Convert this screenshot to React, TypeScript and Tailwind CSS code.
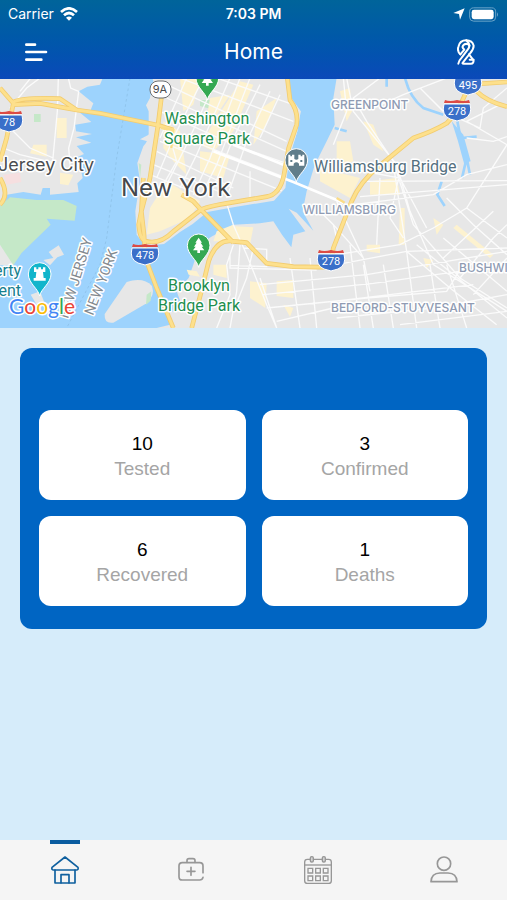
import React from "react";
import { useState } from "react";

const stats = [
  { label: "Tested", value: 10 },
  { label: "Confirmed", value: 3 },
  { label: "Recovered", value: 6 },
  { label: "Deaths", value: 1 },
];

const MANHATTAN =
  "M455 0 L470 20 L450 60 L452 150 L436 205 L415 255 L424 310 L410 400 L414 470 L440 500 L492 492 L540 452 L578 432 L622 398 L700 384 L822 366 L852 330 L866 240 L892 160 L902 100 L872 60 L862 0 Z";

const WATER =
  "M308 0 L300 20 L262 26 L236 40 L280 76 L272 96 L240 104 L274 132 L226 140 L228 160 L276 168 L228 178 L274 194 L230 204 L252 228 L226 240 L240 262 L248 300 L232 316 L236 342 L150 350 L150 330 L128 330 L122 350 L70 342 L20 350 L0 384 L0 750 L470 750 L510 740 L505 706 L548 690 L530 640 L566 600 L580 560 L600 500 L634 476 L700 440 L780 436 L820 430 L846 470 L874 508 L880 470 L916 460 L866 392 L890 404 L940 458 L908 400 L920 340 L944 262 L980 190 L1004 140 L1000 60 L1010 0 L866 0 L874 60 L902 100 L892 160 L868 240 L856 330 L822 368 L700 388 L622 402 L578 438 L540 462 L492 498 L436 504 L410 470 L406 400 L420 310 L412 255 L430 205 L442 190 L420 184 L446 170 L446 100 L438 82 L450 60 L462 0 Z";

const HIGHWAYS =
  "M0 30 L40 76 L20 180 L0 250 M0 380 Q30 350 0 300 M40 72 Q70 58 180 62 L230 96 L300 106 L475 142 L520 156 M40 80 L120 76 L230 96 M484 60 L474 142 L450 300 L424 400 L416 440 Q420 490 440 490 Q480 500 520 460 L604 394 Q630 384 680 376 L800 356 Q840 350 852 290 L866 210 L890 140 Q896 100 870 66 L862 0 M430 300 L424 400 L432 470 L436 540 L470 630 L520 750 M545 350 L580 370 L604 396 L700 494 M575 750 L604 640 L626 550 Q650 480 700 490 L740 494 L800 556 L880 566 L990 568 L1000 510 L1054 372 Q1080 310 1140 262 L1240 180 Q1300 160 1340 136 L1372 100 L1400 40 M1400 20 L1521 12 M1430 40 Q1460 70 1521 86";

const MINOR_ROADS =
  "M175 0 L172 100 L158 250 M205 0 L212 30 L236 40 L222 150 L206 210 L210 260 M120 0 L80 30 L30 90 M30 150 L90 210 L160 240 M10 210 L60 230 L160 254 M0 250 L50 260 M92 0 L60 40 M0 120 L30 150 " +
  "M682 382 L700 440 L740 530 L800 680 L830 750 M700 500 L680 560 L690 650 L650 750 M720 500 L710 640 L690 750 M760 510 L740 600 L700 700 M690 530 L690 570 L950 576 M690 562 L800 566 L800 514 L730 510 M780 620 L1100 590 L1521 520 M790 650 L1120 616 L1521 560 M800 690 L1100 660 L1340 640 L1390 560 M780 600 L830 750 M870 540 L900 750 M930 540 L950 750 M1050 500 L1080 750 M1090 560 L1120 750 M1000 440 L1090 540 L1110 640 M940 380 L1000 440 L1010 480 M1010 370 L1090 540 " +
  "M1080 356 L1521 320 M1060 380 L1300 350 L1400 290 L1521 260 M1090 310 L1521 308 M1010 530 L1200 500 L1300 450 L1400 390 L1521 200 M1010 560 L1220 520 L1521 510 M1140 0 L1060 60 L1100 130 L1180 250 L1240 440 L1380 600 L1521 690 M1040 0 L1060 100 L1190 260 L1230 400 L1300 560 L1521 700 M1180 260 L1220 520 L1250 750 M1200 280 L1170 420 L1210 480 M1140 300 L1130 500 M1000 200 L1040 100 L1030 0 M1040 270 L1200 300 L1280 450 M1400 180 L1480 190 L1521 176 M1500 80 L1400 130 L1521 200 M1340 0 L1210 50 L1120 90 M1260 30 L1330 100 L1440 150 L1450 90 L1521 30 " +
  "M1340 360 L1420 440 L1521 530 M1400 390 L1521 480 M1330 480 L1521 640 M1220 520 L1350 630 L1490 740 M1250 500 L1521 720 M1340 560 L1400 750 M1330 540 L1480 400 M1380 600 L1480 480 L1521 440 M1420 650 L1521 540 M1000 670 L1420 620 M1010 720 L1300 690 L1521 650 M1200 740 L1521 700 M830 730 L1000 690 M1150 560 L1180 750 M1290 560 L1320 750";

const MANHATTAN_GRID =
  "M560 0 L480 180 M610 0 L520 180 L470 300 M650 0 L560 200 L500 320 M690 0 L590 230 L540 330 M720 0 L630 240 L580 350 M750 0 L650 260 L600 360 M780 20 L700 180 L640 330 M810 40 L740 190 L680 360 M840 50 L780 180 M540 0 L880 130 M500 20 L860 190 M500 60 L860 220 M480 100 L700 200 L870 260 M480 150 L680 230 L860 300 M480 190 L850 340 M470 220 L700 330 M460 260 L680 350 M450 290 L600 350 M510 180 L530 250 L490 320 M750 280 L750 360 M650 0 L880 80";

const BUILT_UP =
  "M540 0 L600 0 L580 80 L550 100 Z M630 60 L690 50 L650 110 L620 120 Z M720 10 L760 20 L700 160 L640 220 L600 200 Z M770 100 L830 60 L800 140 L760 200 Z M490 130 L540 160 L560 290 L520 250 L490 210 Z M600 220 L690 230 L670 300 L600 280 Z M500 310 L600 370 L570 420 L480 460 L440 470 L450 390 Z " +
  "M170 120 L200 120 L200 180 L170 180 Z M100 200 L140 200 L140 236 L90 226 Z M180 284 L220 290 L205 322 L180 318 Z M1020 40 L1050 30 L1056 100 L1040 130 Z M1090 130 L1120 140 L1150 220 L1120 200 Z M1010 190 L1050 190 L1060 250 L1010 270 Z M960 270 L1080 300 L1050 360 L960 310 Z M1110 310 L1190 300 L1200 350 L1110 350 Z M690 444 L760 448 L750 500 L700 490 Z M650 460 L700 440 L700 490 L640 490 Z M830 610 L880 606 L880 660 L830 654 Z M750 610 L800 616 L796 690 L750 660 Z M640 560 L680 560 L680 600 L640 590 Z M1200 390 L1214 390 L1214 500 L1196 500 Z M1300 420 L1330 440 L1310 470 Z M1370 440 L1480 530 L1470 540 L1360 450 Z M1100 500 L1140 500 L1140 526 L1100 520 Z M850 680 L880 690 L870 716 Z M1270 540 L1300 546 L1280 570 Z M560 575 L590 580 L600 596 L566 590 Z";

type PinProps = {
  x: number;
  y: number;
  color: string;
  children: React.ReactNode;
};

function Pin({ x, y, color, children }: PinProps) {
  return (
    <g transform={`translate(${x} ${y})`}>
      <path
        d="M0 66 C-4 44 -34 28 -34 0 A34 34 0 0 1 34 0 C34 28 4 44 0 66 Z"
        fill={color}
        stroke="#ffffff"
        strokeWidth="3"
      />
      <g fill="#ffffff">{children}</g>
    </g>
  );
}

function Shield({ x, y, label }: { x: number; y: number; label: string }) {
  return (
    <g transform={`translate(${x} ${y})`}>
      <path
        d="M-13 -5 H13 Q16 6 7 10 Q3 11 0 12 Q-3 11 -7 10 Q-16 6 -13 -5 Z"
        fill="#3a6fc9"
        stroke="#ffffff"
        strokeWidth="1"
      />
      <path d="M-12 -9 Q-7 -7 0 -9 Q7 -7 12 -9 L13 -6 H-13 Z" fill="#dc4b45" />
      <text y="6" textAnchor="middle" fill="#ffffff" className="text-[11px] font-['Roboto',sans-serif]">
        {label}
      </text>
    </g>
  );
}

function Tree() {
  return (
    <path d="M0 -23 L10 -8 H6 L14 4 H9 L17 15 H4 V23 H-4 V15 H-17 L-9 4 H-14 L-6 -8 H-10 Z" />
  );
}

function CityMap() {
  return (
    <svg
      viewBox="0 0 507 249"
      preserveAspectRatio="xMidYMid slice"
      className="block w-full h-[249px] font-['Inter',sans-serif]"
      role="img"
      aria-label="Map of New York"
    >
      <defs>
        <clipPath id="manhattan">
          <path d={MANHATTAN} />
        </clipPath>
      </defs>

      <g transform="translate(0 -1) scale(0.33333)">
        <rect width="1521" height="756" fill="#e7e7e7" />
        <path d={WATER} fill="#9dd3fd" />
        <path d={MANHATTAN} fill="#e7e7e7" />

        {/* parks and islands */}
        <path
          d="M0 384 L30 358 L110 366 L190 366 L230 384 L224 428 L140 422 L152 440 L64 526 L40 562 L0 530 Z"
          fill="#c5e8c8"
        />
        <path d="M0 500 L40 562 L0 562 Z" fill="#e7e7e7" />
        <path
          d="M380 612 Q430 596 456 624 Q466 652 440 676 L340 734 Q312 738 314 708 Z"
          fill="#e7e7e7"
        />
        <path d="M440 650 L454 640 L452 668 L438 680 Z" fill="#c5e8c8" />
        <path
          d="M130 546 L160 540 L146 522 L176 502 L192 530 L172 538 L150 562 Z M92 650 L120 640 L134 676 L110 680 Z"
          fill="#e7e7e7"
        />
        <path d="M102 108 H122 V132 H102 Z M600 66 L640 66 L630 92 L600 84 Z M416 255 L424 260 L420 300 Z" fill="#c5e8c8" />
        <path d="M10 290 L60 284 L64 312 L20 320 Z" fill="#f6dfe0" />
        <path d={BUILT_UP} fill="#fdf2cf" />

        {/* creeks */}
        <path
          d="M1215 0 Q1230 60 1270 90 L1330 110 M1372 130 L1380 170 L1400 240 L1386 300 M1384 180 L1430 176 M1400 240 L1410 290 M1325 310 L1312 350 L1334 384 M1160 0 V26 M1004 150 L1040 160"
          fill="none"
          stroke="#9dd3fd"
          strokeWidth="8"
        />
        <path d="M1355 130 L1390 170 L1412 250 L1392 256 L1374 190 Z" fill="#9dd3fd" />

        <path d={MINOR_ROADS} fill="none" stroke="#fbfbfb" strokeWidth="4" />
        <g clipPath="url(#manhattan)">
          <path d={MANHATTAN_GRID} fill="none" stroke="#fafafa" strokeWidth="4" />
        </g>
        <path d="M700 200 L850 260 M640 220 L880 312 L1030 374" fill="none" stroke="#ffffff" strokeWidth="8" />
        <path
          d="M390 0 L350 240 L320 480 L300 560 L200 750"
          fill="none"
          stroke="#8abde2"
          strokeWidth="2"
          strokeDasharray="8 8"
        />

        <path d={HIGHWAYS} fill="none" stroke="#f2cc70" strokeWidth="14" strokeLinejoin="round" />
        <path d={HIGHWAYS} fill="none" stroke="#fde08c" strokeWidth="9" strokeLinejoin="round" />
        <path d="M484 150 L520 156 L514 210 M1010 360 L1034 374" fill="none" stroke="#fbdc86" strokeWidth="7" />

        <Pin x={622} y={0} color="#34a853">
          <Tree />
        </Pin>
        <Pin x={596} y={502} color="#34a853">
          <Tree />
        </Pin>
        <Pin x={889} y={246} color="#607d8b">
          <path d="M-24 -16 H-18 V-11 H-13 V-16 H-6 V-3 Q0 1 6 -3 V-16 H13 V-11 H18 V-16 H24 V17 H8 V11 Q0 3 -8 11 V17 H-24 Z M-18 0 H-12 V6 H-18 Z M12 0 H18 V6 H12 Z" fillRule="evenodd" />
        </Pin>
        <Pin x={119} y={588} color="#12b5cb">
          <path d="M-17 -20 H-10 V-14 H-4 V-20 H4 V-14 H10 V-20 H17 V-6 H10 L12 12 H18 V20 H-18 V12 H-12 L-10 -6 H-17 Z" />
        </Pin>
      </g>

      <rect x="150" y="2" width="21" height="17" rx="8" fill="#ffffff" stroke="#6b6f73" strokeWidth="1" />
      <text x="160" y="14" textAnchor="middle" fill="#4a4d50" className="text-[11px]">
        9A
      </text>
      <Shield x={9} y={41} label="78" />
      <Shield x={145} y={174} label="478" />
      <Shield x={331} y={180} label="278" />
      <Shield x={457} y={30} label="278" />
      <Shield x={468} y={4} label="495" />

      <g stroke="#ffffff" strokeWidth="3" strokeLinejoin="round" paintOrder="stroke">
        <g fill="#1e8e4e" textAnchor="middle" className="text-[16px] font-['Roboto',sans-serif]">
          <text x="207" y="45">Washington</text>
          <text x="207" y="65">Square Park</text>
          <text x="199" y="212">Brooklyn</text>
          <text x="199" y="232">Bridge Park</text>
        </g>
        <g fill="#15808f" textAnchor="end" className="text-[16px] font-['Roboto',sans-serif]">
          <text x="21" y="197">erty</text>
          <text x="21" y="217">ent</text>
        </g>
        <text x="314" y="93" fill="#557080" className="text-[16px] font-['Roboto',sans-serif]">
          Williamsburg Bridge
        </text>
        <text x="-2" y="92" fill="#4a4d50" className="text-[18px]">
          Jersey City
        </text>
        <text x="121" y="117" fill="#45484b" className="text-[24px]">
          New York
        </text>
        <g fill="#8f9bb3" className="text-[12px] font-medium">
          <text x="331" y="30">GREENPOINT</text>
          <text x="303" y="135">WILLIAMSBURG</text>
          <text x="459" y="193">BUSHWICK</text>
          <text x="331" y="233">BEDFORD-STUYVESANT</text>
        </g>
        <g fill="#82888e" className="text-[14px] font-['Roboto',sans-serif]">
          <text transform="translate(68 240) rotate(-73)">NEW JERSEY</text>
          <text transform="translate(93 237) rotate(-69)">NEW YORK</text>
        </g>
        <text x="9" y="235" className="text-[21px] font-['Lato',sans-serif]">
          <tspan fill="#4285f4">G</tspan>
          <tspan fill="#ea4335">o</tspan>
          <tspan fill="#fbbc05">o</tspan>
          <tspan fill="#4285f4">g</tspan>
          <tspan fill="#34a853">l</tspan>
          <tspan fill="#ea4335">e</tspan>
        </text>
      </g>
    </svg>
  );
}

function StatusBar() {
  return (
    <div className="grid grid-cols-3 items-center h-7 px-2 text-[14px] leading-4">
      <div className="flex items-center gap-1.5">
        <span>Carrier</span>
        <svg viewBox="0 0 54 42" className="w-[18px] h-3.5" fill="none" stroke="#ffffff" strokeWidth="8">
          <path d="M3 15 Q27 -7 51 15" />
          <path d="M12 25 Q27 11 42 25" />
          <path d="M27 41 L18 32 Q27 25 36 32 Z" fill="#ffffff" stroke="none" />
        </svg>
      </div>
      <div className="text-center font-semibold">7:03 PM</div>
      <div className="flex items-center justify-end gap-1">
        <svg viewBox="0 0 36 36" className="w-3 h-3" fill="#ffffff">
          <path d="M35 1 L21 35 L18 18 L1 15 Z" />
        </svg>
        <svg viewBox="0 0 90 44" className="w-[30px] h-[15px]">
          <rect x="2" y="2" width="78" height="40" rx="12" fill="none" stroke="#6aa4c9" strokeWidth="3" />
          <rect x="8" y="8" width="66" height="28" rx="7" fill="#ffffff" />
          <path d="M84 15 Q90 22 84 29 Z" fill="#6aa4c9" />
        </svg>
      </div>
    </div>
  );
}

function HomeIcon() {
  return (
    <svg viewBox="0 0 84 84" className="w-7 h-7" fill="none" stroke="currentColor" strokeWidth="5" strokeLinejoin="round" strokeLinecap="round">
      <path d="M42 3 L81 34 Q83 42 76 42 H8 Q1 42 3 34 Z" />
      <path d="M12 42 V81 H72 V42" />
      <path d="M30 81 V56 H54 V81" />
    </svg>
  );
}

function KitIcon() {
  return (
    <svg viewBox="0 0 84 84" className="w-7 h-7" fill="none" stroke="currentColor" strokeWidth="5" strokeLinejoin="round" strokeLinecap="round">
      <path d="M78 50 V30 Q78 20 68 20 H16 Q6 20 6 30 V62 Q6 72 16 72 H68 Q76 72 78 64" />
      <path d="M30 19 V14 Q30 8 36 8 H48 Q54 8 54 14 V19" />
      <path d="M42 34 V58 M30 46 H54" />
    </svg>
  );
}

function CalendarIcon() {
  return (
    <svg viewBox="0 0 84 84" className="w-7 h-7" fill="none" stroke="currentColor" strokeWidth="4">
      <rect x="2" y="10" width="80" height="72" rx="8" />
      <path d="M2 27 H82" />
      <rect x="19" y="2" width="9" height="16" rx="4" fill="#d2d2d2" />
      <rect x="55" y="2" width="9" height="16" rx="4" fill="#d2d2d2" />
      <path d="M12 37 H26 V51 H12 Z M35 37 H49 V51 H35 Z M58 37 H72 V51 H58 Z M12 60 H26 V74 H12 Z M35 60 H49 V74 H35 Z M58 60 H72 V74 H58 Z" />
    </svg>
  );
}

function UserIcon() {
  return (
    <svg viewBox="0 0 84 84" className="w-7 h-7" fill="none" stroke="currentColor" strokeWidth="5" strokeLinejoin="round">
      <circle cx="42" cy="23" r="20" />
      <path d="M3 77 Q4 52 30 51 H54 Q80 52 81 77 Z" />
    </svg>
  );
}

const tabs = [
  { id: "home", label: "Home", icon: <HomeIcon /> },
  { id: "health", label: "Health", icon: <KitIcon /> },
  { id: "calendar", label: "Calendar", icon: <CalendarIcon /> },
  { id: "profile", label: "Profile", icon: <UserIcon /> },
];

function App() {
  const [activeTab, setActiveTab] = useState("home");

  return (
    <div className="min-h-screen flex flex-col bg-[#d6ecfa] font-['Inter',sans-serif]">
      <header className="bg-linear-to-b from-[#00649a] to-[#0b49b9] text-white">
        <StatusBar />
        <div className="grid grid-cols-3 items-center h-[51px] px-6 pb-1">
          <button type="button" aria-label="Menu" className="w-6 cursor-pointer">
            <svg viewBox="0 0 72 60" className="w-6 h-5" stroke="#ffffff" strokeWidth="8" strokeLinecap="round">
              <path d="M7 8 H33 M7 30 H66 M7 53 H52" />
            </svg>
          </button>
          <h1 className="text-center text-[21px] leading-6">Home</h1>
          <button type="button" aria-label="Covid ribbon" className="justify-self-end px-2 cursor-pointer">
            <svg viewBox="0 0 54 78" className="w-[18px] h-[26px]" fill="none" stroke="#ffffff" strokeWidth="6" strokeLinecap="round" strokeLinejoin="round">
              <path d="M10 46 Q0 36 4 24 Q8 4 28 4 Q46 4 50 20 Q50 30 40 42 L18 70 Q14 74 20 74 H42 Q50 74 50 62 H38" />
              <path d="M10 46 L22 32 Q14 26 18 20 Q24 12 34 16 Q40 22 32 32 L14 56 Q6 64 4 74" />
              <path d="M28 4 Q36 10 38 20 M36 46 L48 62" />
            </svg>
          </button>
        </div>
      </header>

      <CityMap />

      <main className="flex-1 p-5">
        <section className="grid grid-cols-2 gap-4 px-[19px] pt-[62px] pb-[23px] rounded-xl bg-[#0065c3] font-['Liberation_Sans',sans-serif]">
          {stats.map((stat) => (
            <div
              key={stat.label}
              className="flex flex-col items-center justify-center h-[90px] pt-0.5 rounded-xl bg-white text-[19px] leading-[25px]"
            >
              <span className="text-black">{stat.value}</span>
              <span className="text-[#a5a5a5]">{stat.label}</span>
            </div>
          ))}
        </section>
      </main>

      <nav className="grid grid-cols-4 h-[60px] pl-0.5 bg-[#f5f5f5]">
        {tabs.map((tab) => (
          <button
            key={tab.id}
            type="button"
            aria-label={tab.label}
            onClick={() => setActiveTab(tab.id)}
            className={
              activeTab === tab.id
                ? "flex flex-col items-center text-[#0f609f] cursor-pointer"
                : "flex flex-col items-center text-[#979797] cursor-pointer"
            }
          >
            <span className={activeTab === tab.id ? "w-[30px] h-1 mb-3 bg-[#0a5ca0]" : "w-[30px] h-1 mb-3"} />
            {tab.icon}
          </button>
        ))}
      </nav>
    </div>
  );
}

export default App;
